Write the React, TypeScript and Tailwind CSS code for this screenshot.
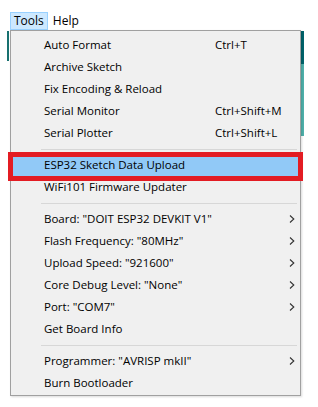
type Item = { label: string; shortcut?: string; sub?: boolean; active?: boolean }

const groups: Item[][] = [
  [
    { label: 'Auto Format', shortcut: 'Ctrl+T' },
    { label: 'Archive Sketch' },
    { label: 'Fix Encoding & Reload' },
    { label: 'Serial Monitor', shortcut: 'Ctrl+Shift+M' },
    { label: 'Serial Plotter', shortcut: 'Ctrl+Shift+L' },
  ],
  [{ label: 'ESP32 Sketch Data Upload', active: true }, { label: 'WiFi101 Firmware Updater' }],
  [
    { label: 'Board: "DOIT ESP32 DEVKIT V1"', sub: true },
    { label: 'Flash Frequency: "80MHz"', sub: true },
    { label: 'Upload Speed: "921600"', sub: true },
    { label: 'Core Debug Level: "None"', sub: true },
    { label: 'Port: "COM7"', sub: true },
    { label: 'Get Board Info' },
  ],
  [{ label: 'Programmer: "AVRISP mkII"', sub: true }, { label: 'Burn Bootloader' }],
]

function MenuRow({ item }: { item: Item }) {
  return (
    <div
      className={`relative mx-[2px] h-[22px] flex items-center pl-[31px] pr-[3px] whitespace-nowrap ${
        item.active ? 'bg-[#91c9f7]' : ''
      }`}
    >
      <span className="w-[171px] shrink-0">{item.label}</span>
      {item.shortcut && <span>{item.shortcut}</span>}
      {item.sub && (
        <svg className="ml-auto" width="6" height="10" viewBox="0 0 6 10" fill="none">
          <path d="M1 1.5 L4.8 5 L1 8.5" stroke="#333" strokeWidth="1.1" />
        </svg>
      )}
      {item.active && (
        <div className="absolute left-[-5px] right-[-5px] top-[-2px] bottom-[-5px] border-[5px] border-[#e31c23]" />
      )}
    </div>
  )
}

export default function App() {
  return (
    <div className="relative w-[318px] h-[407px] bg-white overflow-hidden text-[11.5px] text-black font-['Segoe_UI','Open_Sans',sans-serif]">
      {/* bits of the IDE window behind the menu */}
      <div className="absolute left-[7px] top-[31px] w-[2px] h-[30px] bg-[#17706f]" />
      <div className="absolute left-[301px] top-[31px] w-[3px] h-[33px] bg-[#00636b]" />
      <div className="absolute left-[301px] top-[64px] w-[3px] h-[72px] bg-[#4fb1ab]" />

      <div className="flex items-start pl-[10px] pt-[12px] h-[30px] text-[12px]">
        <div className="h-[18px] px-[3px] flex items-center bg-[#cce8ff] border border-[#99d1ff]">Tools</div>
        <div className="h-[18px] pl-[5px] flex items-center">Help</div>
      </div>

      <div className="relative ml-[10px] w-[291px] bg-[#f0f0f0] border border-[#a0a0a0] pt-[3px] pb-[1px] shadow-[1px_1px_2px_rgba(0,0,0,0.15)]">
        {groups.map((group, gi) => (
          <div key={gi}>
            {gi > 0 && (
              <div className="h-[10px] flex items-center pl-[30px] pr-[3px]">
                <div className="h-px w-full bg-[#d7d7d7]" />
              </div>
            )}
            {group.map(item => (
              <MenuRow key={item.label} item={item} />
            ))}
          </div>
        ))}
      </div>
    </div>
  )
}
